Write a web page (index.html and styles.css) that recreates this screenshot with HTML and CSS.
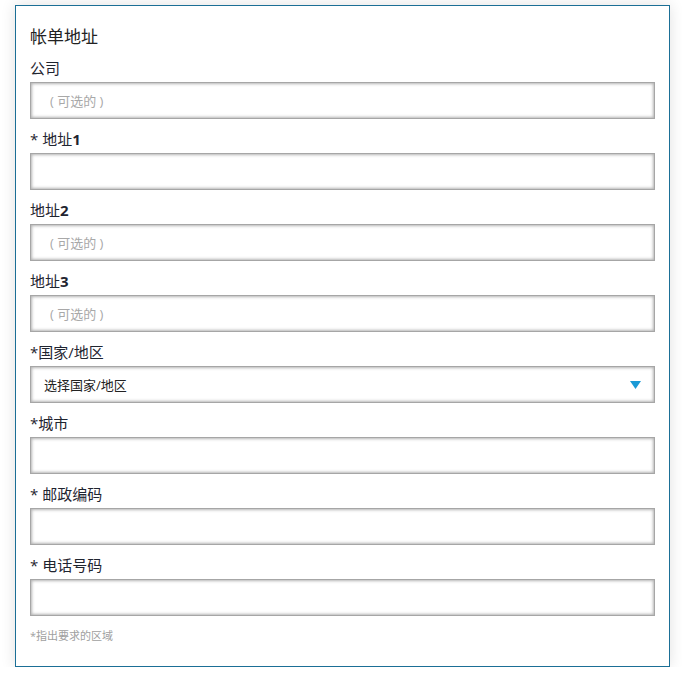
FILE: index.html
```html
<!DOCTYPE html>
<html lang="zh-CN">
<head>
    <meta charset="UTF-8">
    <meta name="viewport" content="width=device-width, initial-scale=1.0">
    <title>帐单地址</title>
    <link rel="stylesheet" href="styles.css">
</head>
<body>
    <section class="panel">
        <h2 class="title">帐单地址</h2>
        <form class="form">
            <div class="field">
                <label class="label">公司</label>
                <input class="input opt" type="text" placeholder="( 可选的 )">
            </div>
            <div class="field">
                <label class="label">* 地址<span class="num">1</span></label>
                <input class="input" type="text">
            </div>
            <div class="field">
                <label class="label">地址<span class="num">2</span></label>
                <input class="input opt" type="text" placeholder="( 可选的 )">
            </div>
            <div class="field">
                <label class="label">地址<span class="num">3</span></label>
                <input class="input opt" type="text" placeholder="( 可选的 )">
            </div>
            <div class="field">
                <label class="label">*国家/地区</label>
                <div class="select-wrap">
                    <select class="input select">
                        <option>选择国家/地区</option>
                    </select>
                    <svg class="arrow" width="11" height="8" viewBox="0 0 11 8"><path d="M0 0H11L5.5 8Z" fill="#1a9ad6"/></svg>
                </div>
            </div>
            <div class="field">
                <label class="label">*城市</label>
                <input class="input" type="text">
            </div>
            <div class="field">
                <label class="label">* 邮政编码</label>
                <input class="input" type="text">
            </div>
            <div class="field">
                <label class="label">* 电话号码</label>
                <input class="input" type="text">
            </div>
            <p class="note">*指出要求的区域</p>
        </form>
    </section>
</body>
</html>
```

FILE: styles.css
```css
* {
    margin: 0;
    padding: 0;
    box-sizing: border-box;
}

body {
    background-color: #fff;
    font-family: "Open Sans", "Noto Sans CJK SC", sans-serif;
    color: #222;
    padding: 5px 0 0 15px;
}

.panel {
    width: 655px;
    height: 662px;
    background-color: #fff;
    border: 1px solid #1b6f96;
    box-shadow: 0 0 14px rgba(0, 0, 0, .12);
    padding: 20px 14px 0 14px;
}

.title {
    font-size: 17px;
    font-weight: normal;
    line-height: 22px;
    height: 22px;
    color: #222;
    margin-bottom: 10px;
}

.field {
    margin-bottom: 10px;
}

.label {
    display: block;
    font-size: 15px;
    line-height: 20px;
    height: 20px;
    margin-bottom: 4px;
    color: #1f2530;
}

.num {
    font-weight: 700;
}

.input {
    display: block;
    width: 100%;
    height: 37px;
    border: 1px solid #a6a6a6;
    box-shadow: inset 0 0 3px 1px rgba(0, 0, 0, .3);
    background-color: #fff;
    font-family: "Open Sans", "Noto Sans CJK SC", sans-serif;
    font-size: 13px;
    color: #222;
    padding: 0 13px;
    outline: none;
}

.opt {
    padding-left: 19px;
}

.input::placeholder {
    color: #a8a8a8;
}

.select-wrap {
    position: relative;
}

.select {
    appearance: none;
    -webkit-appearance: none;
}

.arrow {
    position: absolute;
    right: 14px;
    top: 15px;
}

.note {
    font-size: 11px;
    line-height: 14px;
    color: #a0a0a0;
    margin-top: 13px;
}
```
